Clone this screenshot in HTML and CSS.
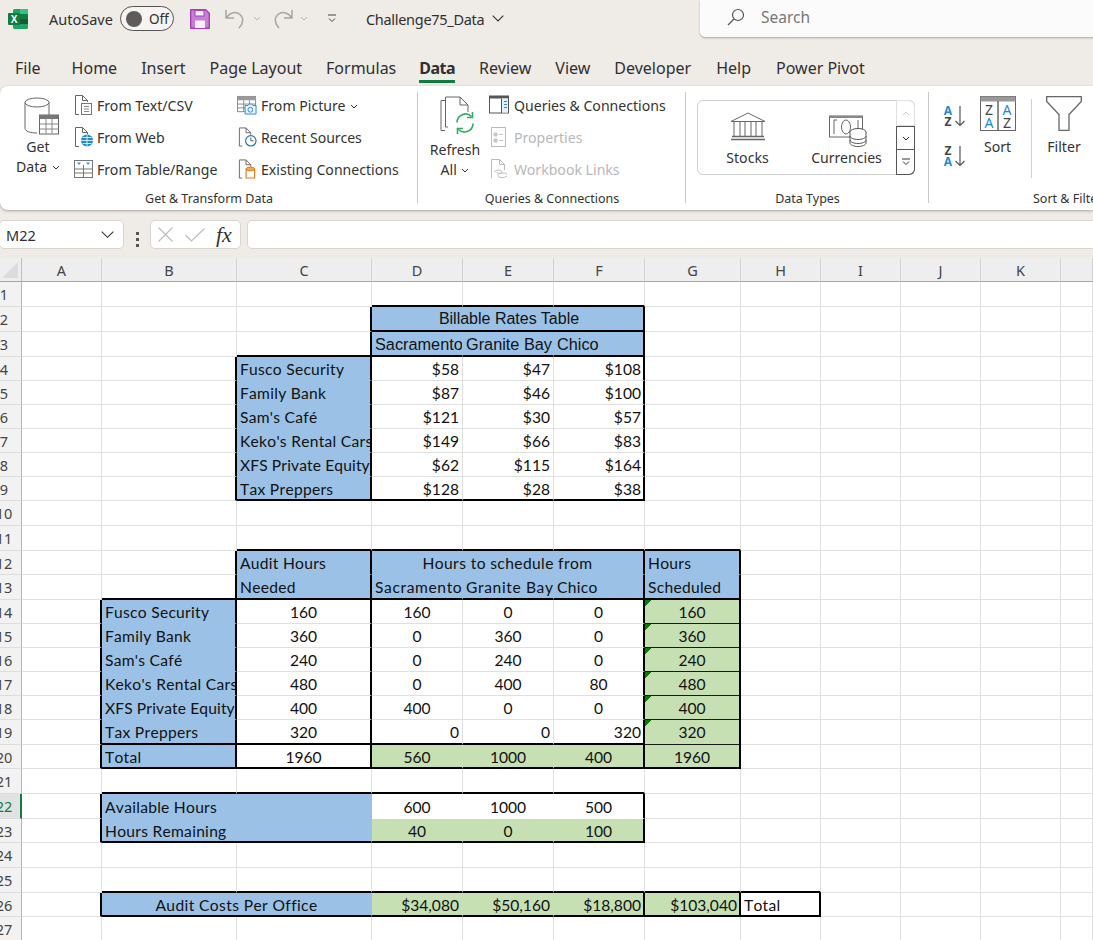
FILE: index.html
```html
<!DOCTYPE html>
<html lang="en">
<head>
<meta charset="utf-8">
<title>Challenge75_Data</title>
<link rel="stylesheet" href="styles.css">
</head>
<body>
<div class="app">
  <header class="titlebar">
    <svg class="logo" width="20" height="20" viewBox="0 0 20 20"><rect x="5" y="0" width="15" height="20" rx="1.500" fill="#21a366"/><rect x="12" y="5" width="8" height="5" fill="#107c41"/><rect x="12" y="10" width="8" height="5" fill="#185c37"/><rect x="12" y="0" width="8" height="5" fill="#33c481"/><rect x="0" y="4" width="12" height="12" rx="1" fill="#107c41"/><text x="6" y="13.500" class="logo-x" text-anchor="middle">X</text></svg>
    <span class="autosave">AutoSave</span>
    <span class="toggle"><span class="knob"></span><span class="off">Off</span></span>
    <svg class="save" width="20" height="20" viewBox="0 0 20 20"><path d="M.7.7h15l3.600 3.600v15H.7z" fill="#c77fd4" stroke="#a93fbc" stroke-width="1.400"/><rect x="5" y="1.400" width="9" height="5.600" fill="#f7eefa" stroke="#a93fbc"/><rect x="5" y="11.500" width="10" height="7.500" fill="#f7eefa"/></svg>
    <svg class="undo" width="20" height="20" viewBox="0 0 20 20"><path d="M1 1v8h8M1.500 8.500C5 3.500 11 2 15 5.500c4 3.500 3.500 9-1 13.500" fill="none" stroke="#a9a5a2" stroke-width="1.500"/></svg>
    <svg class="minichev first" width="8" height="5" viewBox="0 0 8 5"><path d="M1 1l3 3 3-3" fill="none" stroke="#b8b4b1"/></svg>
    <svg class="redo" width="20" height="20" viewBox="0 0 20 20"><path d="M19 1v8h-8M18.500 8.500C15 3.500 9 2 5 5.500c-4 3.500-3.500 9 1 13.500" fill="none" stroke="#a9a5a2" stroke-width="1.500"/></svg>
    <svg class="minichev second" width="8" height="5" viewBox="0 0 8 5"><path d="M1 1l3 3 3-3" fill="none" stroke="#b8b4b1"/></svg>
    <svg class="customize" width="10" height="9" viewBox="0 0 10 9"><path d="M1 1h8M2 4.500l3 3 3-3" fill="none" stroke="#444"/></svg>
    <span class="filename">Challenge75_Data</span>
    <svg class="filechev" width="12" height="7" viewBox="0 0 12 7"><path d="M.7.7L6 6l5.300-5.300" fill="none" stroke="#333" stroke-width="1.100"/></svg>
    <div class="search">
      <svg width="18" height="18" viewBox="0 0 18 18"><circle cx="11" cy="7" r="5.500" fill="none" stroke="#555" stroke-width="1.200"/><path d="M7 11l-6 6" stroke="#555" stroke-width="1.200"/></svg>
      <span>Search</span>
    </div>
  </header>

  <nav class="tabs">
    <span class="tab file">File</span>
    <span class="tab">Home</span>
    <span class="tab">Insert</span>
    <span class="tab">Page Layout</span>
    <span class="tab">Formulas</span>
    <span class="tab active">Data</span>
    <span class="tab">Review</span>
    <span class="tab">View</span>
    <span class="tab">Developer</span>
    <span class="tab nudge">Help</span>
    <span class="tab nudge">Power Pivot</span>
  </nav>

  <section class="ribbon">
    <div class="group g1">
      <div class="gbody">
        <div class="large getdata">
          <svg width="36" height="40" viewBox="0 0 36 40"><path d="M1 6v26c0 2.500 5 4.500 12 4.500M25 6v13" fill="none" stroke="#666"/><ellipse cx="13" cy="6" rx="12" ry="4.500" fill="#fff" stroke="#666"/><rect x="15.500" y="18.500" width="19" height="19" fill="#fff" stroke="#666"/><rect x="15.500" y="18.500" width="19" height="4" fill="#777"/><path d="M15.500 27.500h19M15.500 32.500h19M22 22v15M28 22v15" stroke="#888" fill="none"/></svg>
          <span class="lbl">Get</span>
          <span class="lbl">Data <svg class="chev" width="8" height="5" viewBox="0 0 8 5"><path d="M1 1l3 3 3-3" fill="none" stroke="#333"/></svg></span>
        </div>
        <div class="smallcol col1">
          <div class="item"><svg width="20" height="20" viewBox="0 0 20 20"><path d="M5 19.500H1.500V.5h7l5 5v1.500M8.500.5v5h5" fill="none" stroke="#666"/><rect x="7.500" y="8.500" width="10" height="11" fill="#fff" stroke="#777"/><path d="M10 11.500h5M10 14h5M10 16.500h5" stroke="#888"/></svg><span>From Text/CSV</span></div>
          <div class="item"><svg width="20" height="20" viewBox="0 0 20 20"><path d="M5 19.500H1.500V.5h7l5 5v2M8.500.5v5h5" fill="none" stroke="#666"/><circle cx="13" cy="13.500" r="6" fill="#1f8ad2"/><path d="M7 13.500h12M13 7.500v12M8.500 10.500h9M8.500 16.500h9" stroke="#fff" stroke-width=".8"/></svg><span>From Web</span></div>
          <div class="item"><svg width="20" height="20" viewBox="0 0 20 20"><rect x=".5" y="1.500" width="18" height="17" fill="#fff" stroke="#777"/><path d="M.5 10h18M.5 14h18M9.500 6v12.500" stroke="#777" fill="none"/><path d="M3 3.500h4L5 6zM12 3.500h4L14 6z" fill="#2b9ae0"/></svg><span>From Table/Range</span></div>
        </div>
        <div class="smallcol col2">
          <div class="item"><svg width="21" height="20" viewBox="0 0 21 20"><rect x=".5" y="1" width="19" height="16" fill="#fff" stroke="#888"/><rect x=".5" y="1" width="19" height="4" fill="#999"/><path d="M.5 9h19M.5 13h9M7 5v12M13 5v4" stroke="#888" fill="none"/><path d="M8.500 10.500h3l1-1.500h3l1 1.500h3.500v9h-11.500z" fill="#e6f3fb" stroke="#2b88d8"/><circle cx="14" cy="15" r="2.500" fill="none" stroke="#2b88d8"/></svg><span>From Picture <svg class="chev" width="8" height="5" viewBox="0 0 8 5"><path d="M1 1l3 3 3-3" fill="none" stroke="#333"/></svg></span></div>
          <div class="item"><svg width="21" height="20" viewBox="0 0 21 20"><path d="M5.500 19.500H2.500V.5h7l5 5v2M9.500.5v5h5" fill="none" stroke="#666"/><circle cx="14.500" cy="14" r="5.500" fill="#fff" stroke="#1f6fb0" stroke-width="1.200"/><path d="M14.500 10.500V14h3" fill="none" stroke="#555"/></svg><span>Recent Sources</span></div>
          <div class="item"><svg width="21" height="20" viewBox="0 0 21 20"><path d="M5.500 19.500H2.500V.5h7l5 5v2M9.500.5v5h5" fill="none" stroke="#666"/><path d="M9.500 10v9.500h9V10z" fill="#fff" stroke="#e07b1a" stroke-width="1.200"/><ellipse cx="14" cy="10" rx="4.500" ry="2" fill="#f3a654" stroke="#e07b1a"/></svg><span>Existing Connections</span></div>
        </div>
      </div>
      <div class="glabel">Get &amp; Transform Data</div>
    </div>

    <div class="group g2">
      <div class="gbody">
        <div class="large refresh">
          <svg width="36" height="40" viewBox="0 0 36 40"><path d="M5.500 4h-4.500v30h4" fill="none" stroke="#666"/><path d="M8 30.500H5.500V.5H20l8 8v7M20 .5v8h8" fill="none" stroke="#666"/><path d="M17 26a8.500 8.500 0 0 1 14.500-6M33 27a8.500 8.500 0 0 1-14.500 6" fill="none" stroke="#3aa668" stroke-width="1.600"/><path d="M32.500 15.500v5.500h-5.500M17.500 37.500v-5.500h5.500" fill="none" stroke="#3aa668" stroke-width="1.600"/></svg>
          <span class="lbl">Refresh</span>
          <span class="lbl">All <svg class="chev" width="8" height="5" viewBox="0 0 8 5"><path d="M1 1l3 3 3-3" fill="none" stroke="#333"/></svg></span>
        </div>
        <div class="smallcol col3">
          <div class="item"><svg width="20" height="20" viewBox="0 0 20 20"><rect x=".5" y="1" width="19" height="17" fill="#fff" stroke="#555"/><rect x=".5" y="1" width="19" height="2.500" fill="#555"/><rect x="13" y="3.500" width="6" height="14" fill="#e3f1fb"/><path d="M12.500 3.500V18" stroke="#555"/><path d="M15 6.500h3M15 9.500h3M15 12.500h3" stroke="#2b88d8" stroke-width="1.200"/></svg><span>Queries &amp; Connections</span></div>
          <div class="item disabled"><svg width="20" height="20" viewBox="0 0 20 20"><rect x="2.500" y=".5" width="14" height="19" fill="#fff" stroke="#bbb"/><path d="M5 6h3v3H5zM5 12h3v3H5zM10 7.500h4M10 13.500h4" fill="#c9c9c9" stroke="#c4c4c4"/></svg><span>Properties</span></div>
          <div class="item disabled"><svg width="20" height="20" viewBox="0 0 20 20"><path d="M2.500 19.500V.5h8l5 5V11M10.500.5v5h5" fill="none" stroke="#bbb"/><path d="M5 13c3-3 8-2 8 0s-5 2-5 0M18 15c-3-2-9-1-9 1.500s6 3 9 .5" fill="none" stroke="#bbb"/></svg><span>Workbook Links</span></div>
        </div>
      </div>
      <div class="glabel">Queries &amp; Connections</div>
    </div>

    <div class="group g3">
      <div class="gbody">
        <div class="gallery">
          <div class="gitem stocks">
            <svg width="36" height="30" viewBox="0 0 36 30"><path d="M1 9.500L18 1l17 8.500z" fill="#fff" stroke="#666"/><path d="M2 9.500h32M4 24V10M10 24V10M15 24V10M21 24V10M26 24V10M32 24V10" stroke="#666" fill="none"/><path d="M2 24.500h32M1 27.500h34" stroke="#666" stroke-width="1.500"/></svg>
            <span>Stocks</span>
          </div>
          <div class="gitem currencies">
            <svg width="38" height="32" viewBox="0 0 38 32"><rect x=".5" y="1" width="33" height="21" fill="#fff" stroke="#666"/><rect x=".5" y="1" width="33" height="2" fill="#888"/><path d="M5 19V5h3M29 5v14h-3" fill="none" stroke="#666"/><ellipse cx="17" cy="12" rx="4.500" ry="7" fill="none" stroke="#666"/><ellipse cx="29" cy="17" rx="8" ry="3.500" fill="#fff" stroke="#555"/><path d="M21 17v11c0 2 4 3.500 8 3.500s8-1.500 8-3.500V17M21 21c0 2 4 3.500 8 3.500s8-1.500 8-3.500M21 25c0 2 4 3.500 8 3.500s8-1.500 8-3.500" fill="#fff" stroke="#555"/></svg>
            <span>Currencies</span>
          </div>
          <div class="gscroll">
            <div class="seg up"><svg width="8" height="5" viewBox="0 0 8 5"><path d="M1 4l3-3 3 3" fill="none" stroke="#ccc"/></svg></div>
            <div class="seg dn"><svg width="8" height="5" viewBox="0 0 8 5"><path d="M1 1l3 3 3-3" fill="none" stroke="#333"/></svg></div>
            <div class="seg more"><svg width="8" height="8" viewBox="0 0 8 8"><path d="M0 1h8M1 3.500l3 3 3-3" fill="none" stroke="#333"/></svg></div>
          </div>
        </div>
      </div>
      <div class="glabel">Data Types</div>
    </div>

    <div class="group g4">
      <div class="gbody sortbody">
        <div class="sortcol">
          <svg width="22" height="22" viewBox="0 0 22 22"><text x="5" y="9.500" class="sl blue-t" text-anchor="middle">A</text><text x="5" y="20.500" class="sl dark-t" text-anchor="middle">Z</text><path d="M17 1v19M12.500 16l4.500 4.500 4.500-4.500" fill="none" stroke="#555" stroke-width="1.200"/></svg>
          <svg width="22" height="22" viewBox="0 0 22 22"><text x="5" y="9.500" class="sl dark-t" text-anchor="middle">Z</text><text x="5" y="20.500" class="sl blue-t" text-anchor="middle">A</text><path d="M17 1v19M12.500 16l4.500 4.500 4.500-4.500" fill="none" stroke="#555" stroke-width="1.200"/></svg>
        </div>
        <div class="large sort">
          <svg width="36" height="35" viewBox="0 0 36 35"><rect x=".5" y=".5" width="35" height="34" fill="#fff" stroke="#666"/><rect x=".5" y=".5" width="35" height="5" fill="#999"/><path d="M18 5v30" stroke="#666" stroke-width="1.500"/><text x="9" y="19" class="bl dark-t" text-anchor="middle">Z</text><text x="27" y="19" class="bl blue-t" text-anchor="middle">A</text><text x="9" y="31.500" class="bl blue-t" text-anchor="middle">A</text><text x="27" y="31.500" class="bl dark-t" text-anchor="middle">Z</text></svg>
          <span class="lbl">Sort</span>
        </div>
        <div class="sortdiv"></div>
        <div class="large filter">
          <svg width="36" height="35" viewBox="0 0 36 35"><path d="M.7.7h34.600v4.800L23 18.500v16h-10v-16L.7 5.500z" fill="#fff" stroke="#666" stroke-width="1.300"/></svg>
          <span class="lbl">Filter</span>
        </div>
      </div>
      <div class="glabel sortlabel">Sort &amp; Filter</div>
    </div>
  </section>

  <div class="formulabar">
    <div class="namebox"><span>M22</span><svg width="13" height="7" viewBox="0 0 13 7"><path d="M.7.7l5.800 5.600L12.300.7" fill="none" stroke="#333" stroke-width="1.100"/></svg></div>
    <div class="dots"><i></i><i></i><i></i></div>
    <div class="fxbox">
      <svg width="15" height="15" viewBox="0 0 15 15"><path d="M.5.5l14 14M14.500.5l-14 14" stroke="#bdbdbd" stroke-width="1.200"/></svg>
      <svg width="20" height="14" viewBox="0 0 20 14"><path d="M.5 7l6 6L19.500.5" fill="none" stroke="#bdbdbd" stroke-width="1.200"/></svg>
      <span class="fx">fx</span>
    </div>
    <div class="finput"></div>
  </div>

  <table class="sheet">
    <colgroup><col class="c-rh"><col class="c-a"><col class="c-b"><col class="c-c"><col class="c-d"><col class="c-e"><col class="c-f"><col class="c-g"><col class="c-h"><col class="c-i"><col class="c-j"><col class="c-k"><col class="c-l"></colgroup>
    <thead>
      <tr class="colhead"><th class="corner"><svg width="16" height="16" viewBox="0 0 16 16"><path d="M16 0v16H0z" fill="#dcdcdc"/></svg></th><th>A</th><th>B</th><th>C</th><th>D</th><th>E</th><th>F</th><th>G</th><th>H</th><th>I</th><th>J</th><th>K</th><th></th></tr>
    </thead>
    <tbody>
      <tr class="h25"><th class="rh"><span>1</span></th><td></td><td></td><td></td><td class="eb"></td><td class="eb"></td><td class="eb"></td><td></td><td></td><td></td><td></td><td></td><td></td></tr>
      <tr class="h25"><th class="rh"><span>2</span></th><td></td><td></td><td class="er"></td><td colspan="3" class="blue ar title c eb er">Billable Rates Table</td><td></td><td></td><td></td><td></td><td></td><td></td></tr>
      <tr class="h25"><th class="rh"><span>3</span></th><td></td><td></td><td class="er eb"></td><td class="blue ar eb">Sacramento</td><td class="blue ar eb">Granite Bay</td><td class="blue ar eb er">Chico</td><td></td><td></td><td></td><td></td><td></td><td></td></tr>
      <tr class="h24"><th class="rh"><span>4</span></th><td></td><td class="er"></td><td class="blue er">Fusco Security</td><td class="r">$58</td><td class="r">$47</td><td class="r er">$108</td><td></td><td></td><td></td><td></td><td></td><td></td></tr>
      <tr class="h24"><th class="rh"><span>5</span></th><td></td><td class="er"></td><td class="blue er">Family Bank</td><td class="r">$87</td><td class="r">$46</td><td class="r er">$100</td><td></td><td></td><td></td><td></td><td></td><td></td></tr>
      <tr class="h24"><th class="rh"><span>6</span></th><td></td><td class="er"></td><td class="blue er">Sam's Café</td><td class="r">$121</td><td class="r">$30</td><td class="r er">$57</td><td></td><td></td><td></td><td></td><td></td><td></td></tr>
      <tr class="h24"><th class="rh"><span>7</span></th><td></td><td class="er"></td><td class="blue er">Keko's Rental Cars</td><td class="r">$149</td><td class="r">$66</td><td class="r er">$83</td><td></td><td></td><td></td><td></td><td></td><td></td></tr>
      <tr class="h24"><th class="rh"><span>8</span></th><td></td><td class="er"></td><td class="blue er tight">XFS Private Equity</td><td class="r">$62</td><td class="r">$115</td><td class="r er">$164</td><td></td><td></td><td></td><td></td><td></td><td></td></tr>
      <tr class="h24"><th class="rh"><span>9</span></th><td></td><td class="er"></td><td class="blue er eb">Tax Preppers</td><td class="r eb">$128</td><td class="r eb">$28</td><td class="r er eb">$38</td><td></td><td></td><td></td><td></td><td></td><td></td></tr>
      <tr class="h25"><th class="rh"><span>10</span></th><td></td><td></td><td></td><td></td><td></td><td></td><td></td><td></td><td></td><td></td><td></td><td></td></tr>
      <tr class="h25"><th class="rh"><span>11</span></th><td></td><td></td><td class="eb"></td><td class="eb"></td><td class="eb"></td><td class="eb"></td><td class="eb"></td><td></td><td></td><td></td><td></td><td></td></tr>
      <tr class="h24"><th class="rh"><span>12</span></th><td></td><td class="er"></td><td class="blue er">Audit Hours</td><td colspan="3" class="blue c ls er">Hours to schedule from</td><td class="blue er">Hours</td><td></td><td></td><td></td><td></td><td></td></tr>
      <tr class="h25"><th class="rh"><span>13</span></th><td></td><td class="er eb"></td><td class="blue er eb">Needed</td><td class="blue eb wide">Sacramento</td><td class="blue eb wide">Granite Bay</td><td class="blue eb er">Chico</td><td class="blue eb er">Scheduled</td><td></td><td></td><td></td><td></td><td></td></tr>
      <tr class="h24"><th class="rh"><span>14</span></th><td class="er"></td><td class="blue er">Fusco Security</td><td class="c er">160</td><td class="c">160</td><td class="c">0</td><td class="c er">0</td><td class="green c er tb flag">160</td><td></td><td></td><td></td><td></td><td></td></tr>
      <tr class="h24"><th class="rh"><span>15</span></th><td class="er"></td><td class="blue er">Family Bank</td><td class="c er">360</td><td class="c">0</td><td class="c">360</td><td class="c er">0</td><td class="green c er tb flag">360</td><td></td><td></td><td></td><td></td><td></td></tr>
      <tr class="h24"><th class="rh"><span>16</span></th><td class="er"></td><td class="blue er">Sam's Café</td><td class="c er">240</td><td class="c">0</td><td class="c">240</td><td class="c er">0</td><td class="green c er tb flag">240</td><td></td><td></td><td></td><td></td><td></td></tr>
      <tr class="h24"><th class="rh"><span>17</span></th><td class="er"></td><td class="blue er">Keko's Rental Cars</td><td class="c er">480</td><td class="c">0</td><td class="c">400</td><td class="c er">80</td><td class="green c er tb flag">480</td><td></td><td></td><td></td><td></td><td></td></tr>
      <tr class="h24"><th class="rh"><span>18</span></th><td class="er"></td><td class="blue er tight">XFS Private Equity</td><td class="c er">400</td><td class="c">400</td><td class="c">0</td><td class="c er">0</td><td class="green c er tb flag">400</td><td></td><td></td><td></td><td></td><td></td></tr>
      <tr class="h25"><th class="rh"><span>19</span></th><td class="er"></td><td class="blue er eb">Tax Preppers</td><td class="c er eb">320</td><td class="r eb">0</td><td class="r eb">0</td><td class="r er eb">320</td><td class="green c er tb flag">320</td><td></td><td></td><td></td><td></td><td></td></tr>
      <tr class="h24"><th class="rh"><span>20</span></th><td class="er"></td><td class="blue er eb">Total</td><td class="c er eb">1960</td><td class="green c eb">560</td><td class="green c eb">1000</td><td class="green c er eb">400</td><td class="green c er eb">1960</td><td></td><td></td><td></td><td></td><td></td></tr>
      <tr class="h25"><th class="rh"><span>21</span></th><td></td><td class="eb"></td><td class="eb"></td><td class="eb"></td><td class="eb"></td><td class="eb"></td><td></td><td></td><td></td><td></td><td></td><td></td></tr>
      <tr class="h25"><th class="rh sel"><span>22</span></th><td class="er"></td><td colspan="2" class="blue pt">Available Hours</td><td class="c plain pt">600</td><td class="c plain pt">1000</td><td class="c plain pt er">500</td><td></td><td></td><td></td><td></td><td></td><td></td></tr>
      <tr class="h24"><th class="rh"><span>23</span></th><td class="er"></td><td colspan="2" class="blue eb">Hours Remaining</td><td class="green c eb">40</td><td class="green c eb">0</td><td class="green c er eb">100</td><td></td><td></td><td></td><td></td><td></td><td></td></tr>
      <tr class="h25"><th class="rh"><span>24</span></th><td></td><td></td><td></td><td></td><td></td><td></td><td></td><td></td><td></td><td></td><td></td><td></td></tr>
      <tr class="h25"><th class="rh"><span>25</span></th><td></td><td class="eb"></td><td class="eb"></td><td class="eb"></td><td class="eb"></td><td class="eb"></td><td class="eb"></td><td class="eb"></td><td></td><td></td><td></td><td></td></tr>
      <tr class="h24"><th class="rh"><span>26</span></th><td class="er"></td><td colspan="2" class="blue c ls eb">Audit Costs Per Office</td><td class="green r eb">$34,080</td><td class="green r eb">$50,160</td><td class="green r er eb">$18,800</td><td class="green r er eb">$103,040</td><td class="er eb">Total</td><td></td><td></td><td></td><td></td></tr>
      <tr class="h24"><th class="rh"><span>27</span></th><td></td><td></td><td></td><td></td><td></td><td></td><td></td><td></td><td></td><td></td><td></td><td></td></tr>
    </tbody>
  </table>
</div>
</body>
</html>
```
FILE: styles.css
```css
html,body{margin:0;padding:0;height:940px;overflow:hidden;background:#fff}
.app{width:1093px;height:940px;overflow:hidden;background:#efebe7;font-family:"Noto Sans",sans-serif;color:#2f2f2f}

/* title bar */
.titlebar{display:flex;align-items:center;height:37px;font-size:14.500px}
.titlebar svg{flex:none}
.logo{margin-left:8px}
.logo-x{font:700 10px "Liberation Sans",sans-serif;fill:#fff}
.autosave{margin-left:21px;width:71px}
.toggle{display:flex;align-items:center;box-sizing:border-box;width:54px;height:25px;border:1px solid #555;border-radius:13px;background:#f6f3f0;font-size:13.500px}
.knob{width:16px;height:16px;border-radius:50%;background:#5c5c5c;margin-left:5px}
.off{margin-left:7px}
.save{margin-left:16px}
.undo{margin-left:15px}
.minichev.first{margin-left:8px}
.redo{margin-left:12px}
.minichev.second{margin-left:7px}
.customize{margin-left:19px}
.filename{margin-left:29px;width:117px;white-space:nowrap;letter-spacing:-.3px}
.filechev{margin-left:9px}
.search{display:flex;align-items:center;gap:16px;box-sizing:border-box;position:absolute;left:700px;top:0;width:400px;height:37px;padding:0 0 3px 27px;background:#fbfbfb;border-radius:0 0 0 5px;box-shadow:0 1px 2px rgba(0,0,0,.3);color:#777;font-size:15.500px}

/* tabs */
.tabs{display:flex;gap:24px;height:49px;padding-left:15px;box-sizing:border-box;padding-top:19px;font-size:16px;line-height:24px}
.tab{white-space:nowrap}
.tab.file{margin-right:7px}
.tab.active{font-weight:700;height:27px;box-shadow:inset 0 -3px 0 #107c41;letter-spacing:-.5px;margin:0 0 0 -1px}
.tab.nudge{margin-left:1px}

/* ribbon */
.ribbon{display:flex;height:124px;background:#fff;border-radius:8px 0 0 8px;box-shadow:0 1px 3px rgba(0,0,0,.3);font-size:14.100px;color:#333}
.group{display:flex;flex-direction:column;flex:none;box-sizing:border-box;position:relative}
.g1{width:418px}
.g2{width:268px}
.g3{width:243px}
.g4{width:164px;overflow:hidden}
.g1,.g2,.g3{background:linear-gradient(#c9c9c9,#c9c9c9) right 6px/1px 111px no-repeat}
.gbody{display:flex;height:97px;padding-top:3px;box-sizing:content-box}
.glabel{height:24px;line-height:26px;text-align:center;font-size:12.500px;color:#333;white-space:nowrap}
.sortlabel{text-align:left;padding-left:104px}
.large{display:flex;flex-direction:column;align-items:center;flex:none;padding-top:7px}
.lbl{height:20px;line-height:20px;white-space:nowrap}
.large>svg{height:41px}
.chev{vertical-align:2px;margin-left:1px}
.getdata{width:74px;box-sizing:border-box;padding-left:2px}
.getdata>svg{margin-left:7px}
.refresh{width:68px;margin-left:3px}
.refresh>svg{margin:0 0 3px 5px}
.smallcol{display:flex;flex-direction:column;flex:none}
.item{display:flex;align-items:center;gap:3px;height:32px;white-space:nowrap}
.item>svg{flex:none;width:20px}
.col1{width:163px}
.col2 .item{gap:4px}
.col3 .item{gap:5px}
.disabled{color:#b8b8b8}

/* gallery */
.gallery{display:flex;box-sizing:border-box;width:218px;height:75px;margin:11px 0 0 11px;border:1px solid #cfcfcf;border-radius:6px}
.gitem{display:flex;flex-direction:column;align-items:center;flex:none;height:73px;box-sizing:border-box;width:99px}
.stocks{padding-top:11px}
.stocks svg{margin-bottom:6px}
.currencies{padding-top:14px}
.currencies svg{margin:0 0 1px 3px}
.gscroll{display:flex;flex-direction:column;flex:none;width:19px;margin:-1px -1px -1px 0}
.seg{display:flex;align-items:center;justify-content:center;box-sizing:border-box}
.seg.up{height:26px;border:1px solid #e0e0e0;border-radius:0 6px 0 0}
.seg.dn{height:24px;border:1px solid #555}
.seg.more{height:25px;border:1px solid #555;border-top:0;border-radius:0 0 6px 0}

/* sort */
.sortbody{padding-left:14px}
.sortcol{display:flex;flex-direction:column;gap:18px;width:36px;padding-top:16px;box-sizing:border-box;flex:none;height:85px}
.sortcol svg{overflow:visible}
.sl{font:700 12px "Noto Sans",sans-serif}
.bl{font:400 14px "Noto Sans",sans-serif}
.blue-t{fill:#1f8ad2}
.dark-t{fill:#444}
.sort{width:37px}
.sort>svg,.filter>svg{height:35px;margin-bottom:6px}
.sortdiv{width:1px;height:79px;margin:10px 0 0 15px;background:#cfcfcf;flex:none}
.filter{width:36px;margin-left:14px}

/* formula bar */
.formulabar{display:flex;height:48px;box-sizing:border-box;padding-top:10px}
.namebox,.fxbox,.finput{flex:none;box-sizing:border-box;height:29px;background:#fff;border:1px solid #d9d5d1;border-radius:5px}
.namebox{display:flex;align-items:center;justify-content:space-between;width:125px;margin-left:-1px;padding:0 9px 0 6px;font-size:14.500px}
.dots{flex:none;display:flex;flex-direction:column;justify-content:center;gap:3px;width:26px;align-items:center}
.dots i{width:3px;height:3px;background:#555;display:block}
.fxbox{display:flex;align-items:center;gap:12px;width:91px;padding-left:7px}
.fx{font:italic 400 22px "Liberation Serif",serif;color:#333;margin-left:-1px}
.finput{width:900px;margin-left:6px}

/* sheet */
.sheet{table-layout:fixed;width:1093px;border-collapse:separate;border-spacing:0;background:#fff;color:#111;font:15.600px/20px Lato,sans-serif;font-kerning:none}
.c-rh{width:22px}.c-a{width:80px}.c-b,.c-c{width:135px}.c-d,.c-e,.c-f{width:91px}.c-g{width:96px}.c-h,.c-i,.c-j,.c-k{width:80px}.c-l{width:32px}
.colhead{height:24px}
.colhead th{padding:0;background:#eeeeee;border-right:1px solid #d2d2d2;border-bottom:1px solid #a6a6a6;font:400 14.500px "Noto Sans",sans-serif;color:#444;box-sizing:border-box}
.colhead th.corner{text-align:right;padding-right:3px;line-height:0;border-right:1px solid #bdbdbd}
.h24{height:24px}
.h25{height:25px}
.rh{padding:0;background:#f2f2f2;border-right:1px solid #b5b5b5;border-bottom:1px solid #dcdcdc;font:400 14.500px "Noto Sans",sans-serif;color:#444;overflow:hidden}
.rh span{display:block;width:34px;margin-left:-13px;text-align:center}
.rh.sel{background:#e2e2e2;color:#107c41;border-right:2px solid #107c41}
.sheet td{padding:0 3px;border-right:1px solid #e0e0e0;border-bottom:1px solid #e0e0e0;white-space:nowrap;overflow:hidden;box-sizing:border-box;letter-spacing:.27px}
.sheet td.blue{background:#9bc2e6;border-color:#9bc2e6}
.sheet td.green{background:#c6e0b4;border-color:#c6e0b4}
.sheet td.plain{border-color:#fff}
.sheet td.c,.sheet td.r{letter-spacing:0}
.sheet td.c{text-align:center}
.sheet td.r{text-align:right}
.sheet td.ls{letter-spacing:.38px}
.sheet td.wide{letter-spacing:.6px}
.sheet td.tight{letter-spacing:.12px}
.sheet td.ar{font:16.300px/20px "Liberation Sans",sans-serif;padding:1px 0 0 3px;letter-spacing:0}
.sheet td.title{font-size:16px}
.sheet td.pt{padding-top:2px}
.sheet td.tb{border-bottom:1px solid #1a1a1a}
.sheet td.er{border-right:2px solid #000}
.sheet td.r.er{padding-right:2px}
.sheet td.eb{border-bottom:2px solid #000;padding-top:1px}
.sheet td.flag{background:linear-gradient(135deg,#0b7a0b 0,#0b7a0b 4.500px,transparent 4.500px) #c6e0b4}
```
